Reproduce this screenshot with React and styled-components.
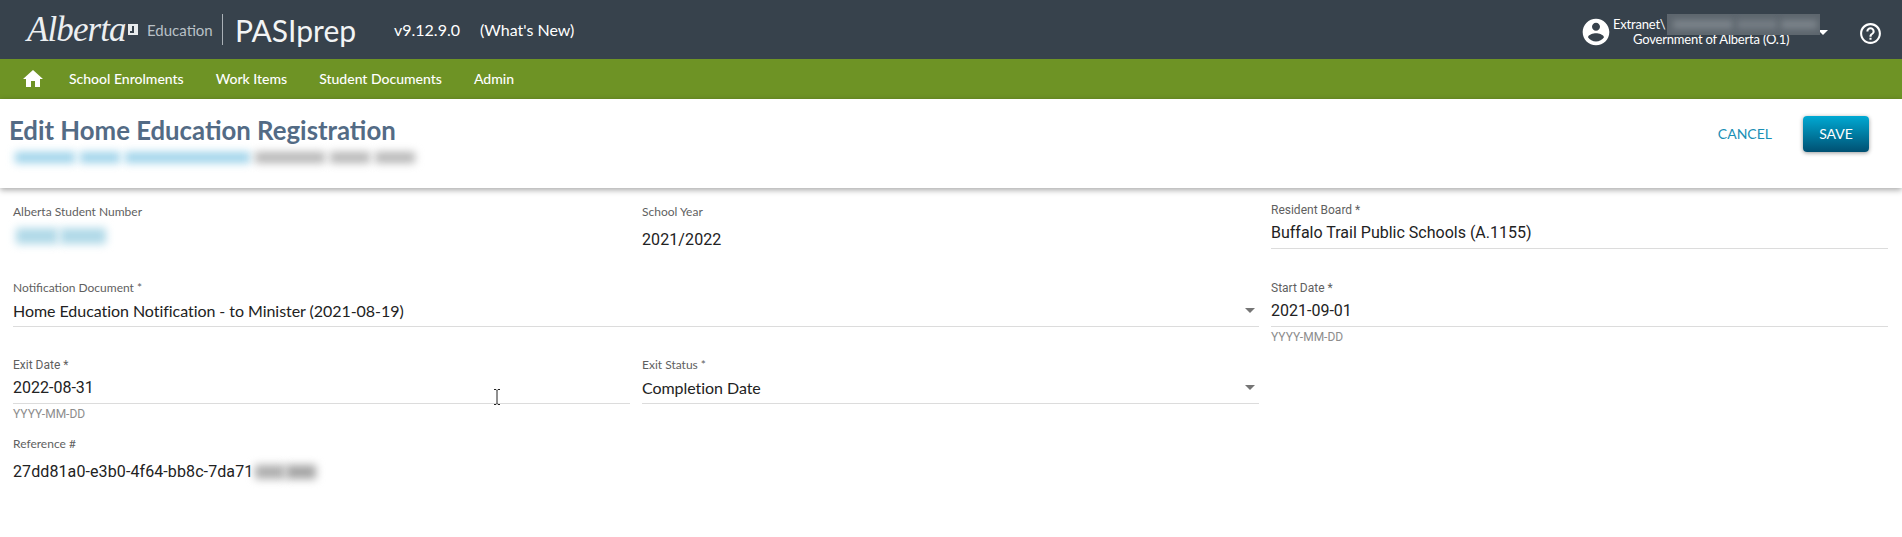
import React from "react";
import styled, { createGlobalStyle } from "styled-components";

const GlobalStyle = createGlobalStyle`
  html, body {
    margin: 0;
    background: #fff;
    font-family: "Lato", "Liberation Sans", sans-serif;
  }
`;

const HomeIcon = () => (
  <svg width="24" height="24" viewBox="0 0 24 24" fill="#fff">
    <path d="M10 20v-6h4v6h5v-8h3L12 3 2 12h3v8z" />
  </svg>
);

const AccountIcon = () => (
  <svg width="32" height="32" viewBox="0 0 24 24" fill="#fff">
    <path d="M12 2C6.48 2 2 6.48 2 12s4.48 10 10 10 10-4.48 10-10S17.52 2 12 2zm0 3c1.66 0 3 1.34 3 3s-1.34 3-3 3-3-1.34-3-3 1.34-3 3-3zm0 14.2c-2.5 0-4.71-1.28-6-3.22.03-1.99 4-3.08 6-3.08 1.99 0 5.97 1.09 6 3.08-1.29 1.94-3.5 3.22-6 3.22z" />
  </svg>
);

const HelpIcon = () => (
  <svg width="25" height="25" viewBox="0 0 24 24" fill="#fff">
    <path d="M11 18h2v-2h-2v2zm1-16C6.48 2 2 6.48 2 12s4.48 10 10 10 10-4.48 10-10S17.52 2 12 2zm0 18c-4.41 0-8-3.59-8-8s3.59-8 8-8 8 3.59 8 8-3.59 8-8 8zm0-14c-2.21 0-4 1.79-4 4h2c0-1.1.9-2 2-2s2 .9 2 2c0 2-3 1.75-3 5h2c0-2.25 3-2.5 3-5 0-2.21-1.79-4-4-4z" />
  </svg>
);

const LogoMark = () => (
  <svg width="10" height="11" viewBox="0 0 10 11" fill="#e8ebed">
    <path d="M0 0h10v11H0zM4 2v5H2v2h4V2z" fillRule="evenodd" />
  </svg>
);

const Page = styled.div`
  position: relative;
  min-height: 537px;
  background: #fff;
  overflow: hidden;
`;

const TopBar = styled.header`
  display: flex;
  align-items: center;
  height: 59px;
  padding: 0 19px 0 27px;
  background: #37424c;
  color: #fff;
  box-sizing: border-box;
`;

const Logo = styled.div`
  display: flex;
  align-items: center;
  width: 195px;
`;

const LogoScript = styled.span`
  width: 101px;
  font-family: "Liberation Serif", serif;
  font-style: italic;
  font-size: 35px;
  line-height: 40px;
  letter-spacing: -0.9px;
  color: #eceff1;
`;

const LogoText = styled.span`
  margin-left: 9px;
  font-size: 15px;
  color: #b9c0c6;
`;

const Divider = styled.span`
  width: 1px;
  height: 31px;
  background: #aab1b7;
`;

const Product = styled.span`
  margin-left: 12px;
  width: 159px;
  font-size: 30px;
  font-weight: 400;
  color: #f2f4f5;
`;

const TopText = styled.span`
  margin-right: 20px;
  font-size: 16px;
  color: #fff;
`;

const UserBox = styled.div`
  display: flex;
  align-items: center;
  margin-left: auto;
  margin-top: 5px;
  position: relative;
`;

const UserText = styled.div`
  margin-left: 1px;
  width: 205px;
  font-size: 13px;
  line-height: 15px;
  letter-spacing: -0.2px;
  color: #fff;
`;

const UserLine = styled.div`
  padding-left: ${(props) => props.$indent || 0}px;
  white-space: nowrap;
`;

const UserBlur = styled.div`
  position: absolute;
  left: 87px;
  top: -2px;
  width: 153px;
  height: 21px;
  background: #5d666e;
  overflow: hidden;
`;

const BlurRow = styled.div`
  display: flex;
  gap: ${(props) => props.$gap || 5}px;
  margin: ${(props) => props.$m || "0"};
`;

const BlurBar = styled.div`
  height: ${(props) => props.$h || 10}px;
  width: ${(props) => props.$w}px;
  background: ${(props) => props.$color};
  filter: blur(${(props) => props.$blur || 4}px);
`;

const Caret = styled.span`
  width: 0;
  height: 0;
  border-left: 5px solid transparent;
  border-right: 5px solid transparent;
  border-top: 5px solid ${(props) => props.$color || "#fff"};
`;

const HelpButton = styled.span`
  display: flex;
  margin-left: 30px;
  margin-top: 2px;
`;

const NavBar = styled.nav`
  display: flex;
  align-items: center;
  height: 40px;
  padding: 0 0 2px 21px;
  box-sizing: border-box;
  gap: 32px;
  background: #6e9325;
`;

const NavHome = styled.span`
  display: flex;
  margin: 2px -8px 0 0;
`;

const NavLink = styled.span`
  font-size: 14px;
  font-weight: 500;
  color: #fff;
`;

const TitleBar = styled.section`
  display: flex;
  justify-content: space-between;
  height: 89px;
  padding: 16px 33px 0 9px;
  box-sizing: border-box;
  background: #fff;
  box-shadow: 0 2px 6px rgba(0, 0, 0, 0.35);
  position: relative;
`;

const Title = styled.h1`
  margin: 0;
  font-size: 25.75px;
  line-height: 30px;
  font-weight: 700;
  color: #536b85;
`;

const Actions = styled.div`
  display: flex;
  align-items: flex-start;
  gap: 31px;
  padding-top: 1px;
`;

const CancelButton = styled.span`
  font-size: 14px;
  line-height: 36px;
  color: #1a8fb5;
`;

const SaveButton = styled.span`
  width: 66px;
  height: 36px;
  line-height: 36px;
  text-align: center;
  font-size: 14px;
  color: #fff;
  border-radius: 4px;
  background: linear-gradient(#00a9d3, #005072);
  box-shadow: 0 1px 4px rgba(0, 0, 0, 0.4);
`;

const Form = styled.section`
  display: grid;
  grid-template-columns: repeat(3, 1fr);
  grid-template-rows: 78px 77px 79px auto;
  column-gap: 12px;
  padding: 15px 14px 0 13px;
`;

const Field = styled.div`
  grid-column: ${(props) => props.$col || "auto"};
`;

const Label = styled.label`
  display: block;
  margin-top: ${(props) => (props.$static ? 2 : 0)}px;
  font-family: ${(props) => (props.$roboto ? '"Roboto"' : '"Lato"')}, sans-serif;
  font-size: 12px;
  line-height: 14px;
  color: #5f5f5f;
  white-space: nowrap;
`;

const Control = styled.div`
  display: flex;
  align-items: center;
  justify-content: space-between;
  height: 32px;
  padding-right: 4px;
  box-sizing: border-box;
  border-bottom: 1px solid #dcdcdc;
`;

const InputValue = styled.span`
  font-family: "Roboto", sans-serif;
  font-size: 16px;
  color: #222;
`;

const SelectValue = styled.span`
  font-family: "Lato", sans-serif;
  font-size: 16px;
  letter-spacing: -0.05px;
  color: #222;
`;

const StaticValue = styled.div`
  margin-top: 9px;
  min-height: 24px;
  font-family: "Roboto", sans-serif;
  font-size: 16px;
  line-height: 24px;
  letter-spacing: 0.1px;
  color: #222;
  position: relative;
`;

const RefBlur = styled.div`
  position: absolute;
  left: 239px;
  top: 0;
  width: 71px;
  height: 24px;
  background: #fff;
  display: flex;
  align-items: center;
`;

const Helper = styled.div`
  margin-top: 3px;
  font-family: "Roboto", sans-serif;
  font-size: 12px;
  line-height: 14px;
  color: #8d8d8d;
`;

const TextCursor = styled.svg`
  position: absolute;
  left: 493px;
  top: 389px;
`;

const InputField = ({ label, value, helper }) => (
  <Field>
    <Label $roboto>{label}</Label>
    <Control>
      <InputValue>{value}</InputValue>
    </Control>
    {helper && <Helper>{helper}</Helper>}
  </Field>
);

const SelectField = ({ label, value, col }) => (
  <Field $col={col}>
    <Label>{label}</Label>
    <Control>
      <SelectValue>{value}</SelectValue>
      <Caret $color="#757575" />
    </Control>
  </Field>
);

const App = () => {
  return (
    <Page>
      <GlobalStyle />
      <TopBar>
        <Logo>
          <LogoScript>Alberta</LogoScript>
          <LogoMark />
          <LogoText>Education</LogoText>
        </Logo>
        <Divider />
        <Product>PASIprep</Product>
        <TopText>v9.12.9.0</TopText>
        <TopText>(What's New)</TopText>
        <UserBox>
          <AccountIcon />
          <UserText>
            <UserLine>Extranet\</UserLine>
            <UserLine $indent={20}>Government of Alberta (O.1)</UserLine>
          </UserText>
          <UserBlur>
            <BlurRow $gap={4} $m="6px 0 0 6px">
              <BlurBar $w={60} $h={9} $color="#7b838a" $blur={3} />
              <BlurBar $w={40} $h={9} $color="#757d84" $blur={3} />
              <BlurBar $w={36} $h={9} $color="#7b838a" $blur={3} />
            </BlurRow>
          </UserBlur>
          <Caret />
          <HelpButton>
            <HelpIcon />
          </HelpButton>
        </UserBox>
      </TopBar>
      <NavBar>
        <NavHome>
          <HomeIcon />
        </NavHome>
        <NavLink>School Enrolments</NavLink>
        <NavLink>Work Items</NavLink>
        <NavLink>Student Documents</NavLink>
        <NavLink>Admin</NavLink>
      </NavBar>
      <TitleBar>
        <div>
          <Title>Edit Home Education Registration</Title>
          <BlurRow $m="7px 0 0 6px">
            <BlurBar $w={60} $h={11} $color="#9ed3ea" />
            <BlurBar $w={40} $h={11} $color="#9ed3ea" />
            <BlurBar $w={125} $h={11} $color="#9ed3ea" />
            <BlurBar $w={70} $h={11} $color="#b5b5b5" />
            <BlurBar $w={40} $h={11} $color="#b5b5b5" />
            <BlurBar $w={40} $h={11} $color="#b5b5b5" />
          </BlurRow>
        </div>
        <Actions>
          <CancelButton>CANCEL</CancelButton>
          <SaveButton>SAVE</SaveButton>
        </Actions>
      </TitleBar>
      <Form>
        <Field>
          <Label $static>Alberta Student Number</Label>
          <StaticValue>
            <BlurRow $m="4px 0 0 3px" $gap={2}>
              <BlurBar $w={42} $h={16} $color="#b0d9e8" />
              <BlurBar $w={46} $h={16} $color="#b0d9e8" />
            </BlurRow>
          </StaticValue>
        </Field>
        <Field>
          <Label $static>School Year</Label>
          <StaticValue>2021/2022</StaticValue>
        </Field>
        <InputField label="Resident Board *" value="Buffalo Trail Public Schools (A.1155)" />
        <SelectField
          col="span 2"
          label="Notification Document *"
          value="Home Education Notification - to Minister (2021-08-19)"
        />
        <InputField label="Start Date *" value="2021-09-01" helper="YYYY-MM-DD" />
        <InputField label="Exit Date *" value="2022-08-31" helper="YYYY-MM-DD" />
        <SelectField label="Exit Status *" value="Completion Date" />
        <Field $col="1 / 2">
          <Label>Reference #</Label>
          <StaticValue>
            27dd81a0-e3b0-4f64-bb8c-7da71
            <RefBlur>
              <BlurRow $m="0 0 0 3px" $gap={1}>
                <BlurBar $w={30} $h={14} $color="#aeaeae" />
                <BlurBar $w={30} $h={14} $color="#a4a4a4" />
              </BlurRow>
            </RefBlur>
          </StaticValue>
        </Field>
      </Form>
      <TextCursor width="8" height="16" viewBox="0 0 8 16" fill="none" stroke="#222" strokeWidth="1">
        <path d="M1 .5h2l1 1 1-1h2M4 1.5v13M1 15.5h2l1-1 1 1h2" />
      </TextCursor>
    </Page>
  );
};

export default App;
